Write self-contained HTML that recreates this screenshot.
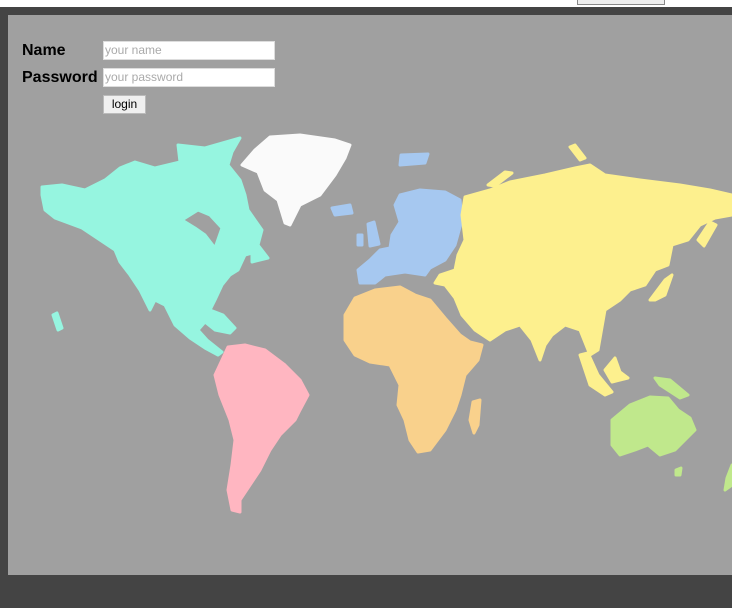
<!DOCTYPE html>
<html><head><style>
html,body{margin:0;padding:0;width:732px;height:608px;overflow:hidden;background:#444;font-family:"Liberation Sans",sans-serif}
#top{position:absolute;left:0;top:0;width:732px;height:7px;background:#fff}
#tb{position:absolute;left:577px;top:-2px;width:86px;height:5px;border:1px solid #888;background:#eee}
#panel{position:absolute;left:8px;top:15px;width:724px;height:560px;background:#a0a0a0}
.lbl{position:absolute;left:22px;font-weight:bold;font-size:16px;color:#000}
.in{position:absolute;left:103px;width:172px;height:19px;background:#fff;border:1px solid #ddd;box-sizing:border-box;font-size:12px;color:#aaa;padding-left:1px;line-height:17px}
#btn{position:absolute;left:103px;top:95px;width:43px;height:19px;background:#f0f0f0;border:1px solid #bbb;box-sizing:border-box;font-size:12px;text-align:center;line-height:17px;color:#000}
svg{position:absolute;left:0;top:0}
svg path{stroke-linejoin:round;stroke-width:3}
</style></head><body>
<div id="top"></div><div id="tb"></div>
<div id="panel"></div>
<svg width="732" height="608" viewBox="0 0 732 608">
<g>
<path fill="#96f5e0" stroke="#96f5e0" fill-rule="evenodd" d="M42,187 L62,185 85,190 105,180 120,168 135,162 155,168 180,162 178,145 205,148 240,138 232,152 228,165 240,180 245,195 248,210 262,230 258,245 268,258 252,262 252,253 245,255 238,270 230,275 222,285 215,300 210,310 223,315 235,328 230,333 215,330 205,322 198,330 207,340 222,352 218,355 205,348 190,338 175,325 165,305 155,300 150,310 140,290 130,275 120,262 115,250 100,240 82,228 55,218 45,210 42,195Z M182,220 L198,210 210,215 222,228 215,248 205,235 195,228Z"/>
<path fill="#96f5e0" stroke="#96f5e0" d="M53,315 L57,313 62,328 58,330Z"/>
<path fill="#fafafa" stroke="#fafafa" d="M242,165 L255,150 270,137 300,135 335,140 350,145 345,158 335,175 320,195 300,205 290,225 285,223 278,200 265,190 258,172Z"/>
<path fill="#ffb6c1" stroke="#ffb6c1" d="M228,347 L245,345 265,350 285,365 300,380 308,395 300,410 295,420 280,435 270,450 260,470 250,485 240,500 240,512 232,510 228,490 232,465 235,440 230,420 220,395 215,375 222,360Z"/>
<path fill="#a6c8f0" stroke="#a6c8f0" d="M400,195 L420,190 445,192 460,200 462,220 455,245 445,260 430,268 425,275 405,272 385,275 375,283 360,283 358,270 370,260 380,250 390,248 392,235 400,222 395,205Z"/>
<path fill="#a6c8f0" stroke="#a6c8f0" d="M401,155 L428,154 425,163 400,165Z M368,224 L374,222 379,244 370,246Z M332,208 L350,205 352,213 335,215Z M358,235 L362,235 362,245 358,245Z"/>
<path fill="#f9d18c" stroke="#f9d18c" d="M345,315 L355,298 375,290 400,287 415,295 430,300 445,318 460,335 470,342 482,345 478,360 465,375 460,395 455,410 445,430 430,450 418,452 410,440 405,420 398,405 400,385 390,365 370,362 355,355 345,340Z M473,402 L480,400 478,425 474,433 470,420Z"/>
<path fill="#fdf08e" stroke="#fdf08e" d="M465,197 L490,190 510,182 545,175 575,168 590,165 605,175 640,180 680,185 710,190 732,195 732,215 715,218 700,225 688,240 672,245 668,265 655,270 645,285 630,290 620,300 605,310 598,350 590,355 580,330 565,325 552,335 545,345 540,360 532,340 520,325 505,330 490,340 475,330 462,315 455,298 445,285 435,283 440,275 455,270 458,255 465,240 462,215Z"/>
<path fill="#fdf08e" stroke="#fdf08e" d="M570,147 L575,145 585,158 580,160Z M488,185 L505,172 512,173 495,186Z M698,240 L710,222 716,225 704,246Z M650,300 L665,280 672,275 665,295 655,300Z M580,355 L588,353 598,375 612,392 605,395 590,385Z M605,370 L615,358 620,372 628,378 612,382Z"/>
<path fill="#c0e88c" stroke="#c0e88c" d="M612,420 L630,405 650,397 668,398 678,410 690,418 695,430 685,440 675,450 660,455 648,445 635,450 620,455 612,445Z M655,378 L670,380 688,395 680,398 660,385Z M676,470 L681,468 680,475 676,475Z M732,465 L732,485 725,490 727,478Z"/>
</g>
</svg>
<div class="lbl" style="top:42px">Name</div>
<div class="lbl" style="top:69px">Password</div>
<div class="in" style="top:41px">your name</div>
<div class="in" style="top:68px">your password</div>
<div id="btn">login</div>
</body></html>
